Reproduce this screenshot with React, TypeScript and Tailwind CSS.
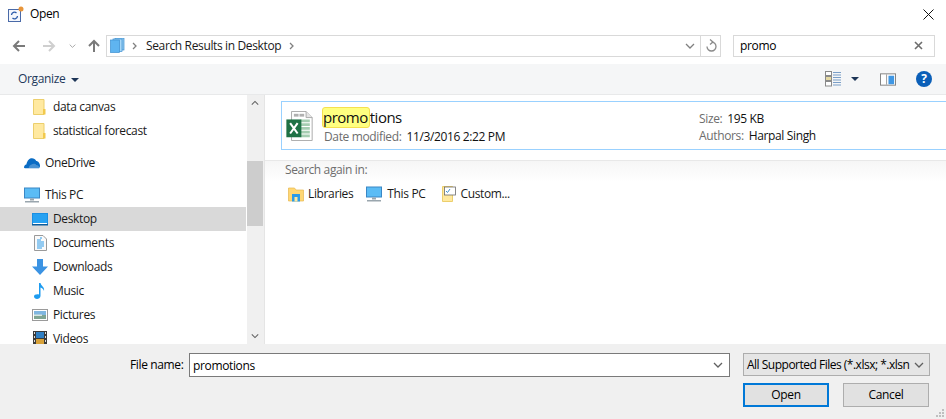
import React from "react";

const Folder = () => (
  <svg width="16" height="16" viewBox="0 0 16 16"><path d="M1.500.5h10.500v15H1.500z" fill="#ffe9a0" stroke="#eccf6c"/><rect x="11" y="10" width="2.500" height="5.500" fill="#f2c94c"/></svg>
);
const Cloud = () => (
  <svg width="17" height="12" viewBox="0 0 17 12"><path d="M0 11c0-2 1-3.500 2.500-3.500C3.500 3 6 1 8.500 1c2 0 3.500 1 4.500 3C15 4 17 6.500 17 9c0 1.500-.5 2-1 2.500H1z" fill="#0a6cc4"/><path d="M5 11.500c0-2 1.500-3.500 3-4 1.500-1 4-1 5 .5 2 0 3.500 1.500 3.500 3.500z" fill="#fff" opacity="0.25"/></svg>
);
const Monitor = ({ w = 16 }: { w?: number }) => (
  <svg width={w} height={w} viewBox="0 0 16 16"><rect x="0.500" y="1" width="15" height="10" fill="#5bbcf5" stroke="#3a87c5"/><rect x="6" y="11.500" width="4" height="2" fill="#9aa6ae"/><rect x="1" y="14" width="14" height="1.500" fill="#9aa6ae"/></svg>
);
const DesktopIcon = () => (
  <svg width="16" height="14" viewBox="0 0 16 14"><rect width="16" height="12" y="1" fill="#1a8fe3"/><rect x="1" y="2" width="14" height="9" fill="#27a2f2"/><rect x="1" y="11" width="14" height="1" fill="#fff"/><rect y="12" width="16" height="1.500" fill="#0a5d9e"/></svg>
);
const Docs = () => (
  <svg width="13" height="16" viewBox="0 0 13 16"><path d="M.5.5h8.500l3.500 3.500v11.500H.5z" fill="#fafafa" stroke="#9a9a9a"/><path d="M3 5h4M6 3h2M3 7h7M3 9h7M3 11h7M3 13h5" stroke="#2c9be8" strokeWidth="1"/></svg>
);
const Down = () => (
  <svg width="16" height="16" viewBox="0 0 16 16"><path d="M5 0h6v7.500h5L8 16 0 7.500h5z" fill="#3b93e3"/></svg>
);
const Music = () => (
  <svg width="12" height="16" viewBox="0 0 12 16"><path d="M5 0h1.500c.5 3 4.500 4 3.500 8-.5-2-2-3-3.500-3.500V13c0 2-2 3-3.500 3S0 15 0 13.500 2 11 5 11.500z" fill="#1e9cf0"/></svg>
);
const Pics = () => (
  <svg width="16" height="12" viewBox="0 0 16 12"><rect x=".5" y=".5" width="15" height="11" fill="#fff" stroke="#9a9a9a"/><rect x="2" y="2" width="12" height="4" fill="#7fb6e0"/><rect x="2" y="6" width="12" height="4" fill="#7fa593"/><rect x="2" y="5.500" width="8" height="1.500" fill="#d8e6e0"/></svg>
);
const Film = () => (
  <svg width="14" height="16" viewBox="0 0 14 16"><rect width="14" height="16" fill="#3a3a3a"/><rect x="3" y="1" width="8" height="6" fill="#2f7fc4"/><rect x="3" y="8" width="8" height="6" fill="#d8a23a"/><path d="M1 1h1v2H1zM1 5h1v2H1zM1 9h1v2H1zM1 13h1v2H1zM12 1h1v2h-1zM12 5h1v2h-1zM12 9h1v2h-1zM12 13h1v2h-1z" fill="#ddd"/></svg>
);
const Excel = () => (
  <svg width="27" height="30" viewBox="0 0 28 32">
    <path d="M5.500.5H21l6.500 6.500v24.500H5.500z" fill="#fff" stroke="#a8a8a8"/>
    <path d="M21 .5V7h6.500" fill="#e4e4e4" stroke="#a8a8a8"/>
    <rect x="8" y="3" width="5" height="3" fill="#b0b0b0"/><rect x="14" y="3" width="5" height="3" fill="#b0b0b0"/>
    <path d="M15 9h10v3H15zM15 13h10v3H15zM15 17h10v3H15zM15 21h10v3H15zM15 25h10v3H15z" fill="#a5cdb1"/>
    <rect x="0" y="9" width="16" height="19" fill="#1e7145"/>
    <path d="M4 13l8 11M12 13L4 24" stroke="#fff" strokeWidth="2.200"/>
  </svg>
);
const Caret = ({ c = "#1d3557" }: { c?: string }) => (
  <svg width="8" height="4" viewBox="0 0 8 4"><path d="M0 0h8L4 4z" fill={c}/></svg>
);
const Chev = ({ c = "#707070", w = 10 }: { c?: string; w?: number }) => (
  <svg width={w} height="6" viewBox="0 0 10 6"><path d="M1 1l4 4 4-4" fill="none" stroke={c} strokeWidth="1.300"/></svg>
);
const Sep = () => (
  <svg width="5" height="8" viewBox="0 0 5 8"><path d="M1 1l3 3-3 3" fill="none" stroke="#808080" strokeWidth="1.300"/></svg>
);
const Arrow = ({ dir, c }: { dir: "l" | "r" | "u"; c: string }) => {
  const rot = dir === "l" ? 0 : dir === "r" ? 180 : 90;
  return (
    <svg width="14" height="14" viewBox="0 0 14 14" style={{ transform: `rotate(${rot}deg)` }}>
      <path d="M13 7H2M7 2L2 7l5 5" fill="none" stroke={c} strokeWidth="2"/>
    </svg>
  );
};

const Row = ({ icon, label, indent, active }: { icon: React.ReactNode; label: string; indent: boolean; active?: boolean }) => (
  <div className={`flex items-center h-6 ${indent ? "pl-[32px]" : "pl-[24px]"} ${active ? "bg-[#d9d9d9]" : ""}`}>
    <div className="w-4 h-4 flex items-center justify-center shrink-0">{icon}</div>
    <span className="ml-[5px] whitespace-nowrap">{label}</span>
  </div>
);

export default function App() {
  return (
    <div className="w-[946px] h-[419px] bg-white overflow-hidden flex flex-col text-[12px] tracking-[-0.36px] text-[#1a1a1a] relative" style={{ fontFamily: '"Open Sans", "Noto Sans", sans-serif' }}>
      {/* title bar */}
      <div className="h-[28px] flex items-center pl-[8px] pr-[12px] shrink-0">
        <svg width="16" height="16" viewBox="0 0 16 16" className="-mt-[1px]">
          <rect x=".5" y="3.500" width="12" height="12" fill="#f4f7fc" stroke="#4a6aa8"/>
          <path d="M3.500 9a3 3 0 0 1 5-2M9.500 10a3 3 0 0 1-5 2" fill="none" stroke="#2a5aa8" strokeWidth="1.300"/>
          <circle cx="13" cy="3" r="2.500" fill="#e8953a"/>
        </svg>
        <span className="ml-[6px] flex-1 text-[12px] text-black">Open</span>
        <svg width="11" height="11" viewBox="0 0 11 11"><path d="M.5.5l10 10M10.500.5l-10 10" stroke="#111" strokeWidth="1"/></svg>
      </div>
      {/* nav bar */}
      <div className="h-[36px] flex items-center shrink-0 pb-[1px] pr-[12px]">
        <div className="w-[106px] flex items-center shrink-0">
          <div className="ml-[12px]"><Arrow dir="l" c="#7a7a7a" /></div>
          <div className="ml-[16px]"><Arrow dir="r" c="#cfcfcf" /></div>
          <div className="ml-[13px]"><Chev c="#a0a0a0" w={7} /></div>
          <div className="ml-[11px]"><Arrow dir="u" c="#7a7a7a" /></div>
        </div>
        <div className="w-[615px] h-[22px] border border-[#d9d9d9] flex items-center shrink-0">
          <svg width="15" height="15" viewBox="0 0 15 15" className="ml-[3px]">
            <rect x="5" y="0" width="9" height="12" fill="#8fc8ef" stroke="#3d8fd0" strokeWidth=".7"/>
            <rect x="3" y="1" width="9" height="12.500" fill="#a8d8f7" stroke="#3d8fd0" strokeWidth=".7"/>
            <rect x=".5" y="2" width="9" height="12.500" fill="#5fb4f0" stroke="#3d8fd0" strokeWidth=".7"/>
          </svg>
          <div className="ml-[7px]"><Sep /></div>
          <span className="ml-[9px] text-[#1a1a1a]">Search Results in Desktop</span>
          <div className="ml-[8px]"><Sep /></div>
          <div className="ml-auto flex items-center h-full">
            <Chev c="#808080" />
            <div className="ml-[5px] w-[20px] h-full border-l border-[#d9d9d9] flex items-center justify-center">
              <svg width="12" height="13" viewBox="0 0 12 13"><path d="M6.500 3a4.500 4.500 0 1 1-4.500 4.500M5 .5L8 3 5 5.500" fill="none" stroke="#8a8a8a" strokeWidth="1.300"/></svg>
            </div>
          </div>
        </div>
        <div className="ml-[12px] w-[202px] h-[22px] border border-[#d9d9d9] flex items-center pl-[6px] pr-[11px] shrink-0">
          <span className="flex-1 text-black">promo</span>
          <svg width="9" height="9" viewBox="0 0 9 9"><path d="M1 1l7 7M8 1L1 8" stroke="#6d6d6d" strokeWidth="1.600"/></svg>
        </div>
      </div>
      {/* toolbar */}
      <div className="h-[31px] bg-[#f5f6f7] border-b border-[#e8e9ea] flex items-center pl-[18px] pr-[14px] shrink-0">
        <span className="text-[#1e395b]">Organize</span>
        <div className="ml-[6px] mt-[1px]"><Caret /></div>
        <div className="ml-auto flex items-center">
          <svg width="16" height="16" viewBox="0 0 16 16">
            <rect x=".5" y=".5" width="6" height="4" fill="#fff" stroke="#8a8a8a"/>
            <rect x=".5" y="5.500" width="6" height="4" fill="#e5d9a3" stroke="#8a8a8a"/>
            <rect x=".5" y="10.500" width="6" height="4.500" fill="#fff" stroke="#8a8a8a"/>
            <path d="M8 1.500h8M8 4h8M8 6.500h8M8 9h8M8 11.500h8M8 14h8" stroke="#7a9fc8" strokeWidth="1"/>
          </svg>
          <div className="ml-[10px]"><Caret /></div>
          <svg width="16" height="13" viewBox="0 0 17 13" className="ml-[21px]">
            <rect x=".5" y=".5" width="16" height="12" fill="#fff" stroke="#7f7f7f"/>
            <rect x="9" y="2.500" width="6" height="9" fill="#3f97e4"/>
            <rect x="6.500" y="1" width="1" height="11" fill="#9a9a9a"/>
          </svg>
          <svg width="16" height="16" viewBox="0 0 16 16" className="ml-[20px]">
            <circle cx="8" cy="8" r="8" fill="#0b5fb8"/>
          </svg>
          <span className="absolute right-[14px] w-4 text-center text-[12px] font-bold text-white leading-none">?</span>
        </div>
      </div>
      {/* main */}
      <div className="flex-1 flex min-h-0">
        <div className="w-[247px] shrink-0 overflow-hidden pr-[1px]">
          <Row indent icon={<Folder />} label="data canvas" />
          <Row indent icon={<Folder />} label="statistical forecast" />
          <div className="mt-[8px]"><Row indent={false} icon={<Cloud />} label="OneDrive" /></div>
          <div className="mt-[8px]"><Row indent={false} icon={<Monitor />} label="This PC" /></div>
          <Row indent active icon={<DesktopIcon />} label="Desktop" />
          <Row indent icon={<Docs />} label="Documents" />
          <Row indent icon={<Down />} label="Downloads" />
          <Row indent icon={<Music />} label="Music" />
          <Row indent icon={<Pics />} label="Pictures" />
          <Row indent icon={<Film />} label="Videos" />
        </div>
        {/* scrollbar */}
        <div className="w-[16px] shrink-0 bg-[#f0f0f0] flex flex-col items-center">
          <div className="h-[17px] flex items-center justify-center rotate-180"><Chev c="#606060" w={8} /></div>
          <div className="h-[49px]" />
          <div className="h-[65px] w-full bg-[#cdcdcd]" />
          <div className="flex-1" />
          <div className="h-[17px] flex items-center justify-center"><Chev c="#606060" w={8} /></div>
        </div>
        <div className="w-[2px] shrink-0 bg-[#f0f0f0] border-r border-[#e5e5e5]" />
        {/* results */}
        <div className="flex-1 min-w-0 pl-[16px] pt-[6px] overflow-hidden">
          <div className="w-[700px] h-[49px] border border-[#99d1ff] flex items-center pl-[4px]">
            <Excel />
            <div className="ml-[10px] w-[376px] shrink-0">
              <div className="text-[15px] leading-[21px] text-[#111] flex tracking-[-0.5px]">
                <span className="bg-[#ffff80] border border-[#f5e050] rounded-[3px] -ml-[1px] leading-[19px] pr-[1px]">promo</span>
                <span>tions</span>
              </div>
              <div className="mt-[1px] ml-[1px] leading-[16px]">
                <span className="text-[#6d6d6d]">Date modified:</span>
                <span className="ml-[5px] text-[#111]">11/3/2016 2:22 PM</span>
              </div>
            </div>
            <div className="leading-[17px] mt-[2px]">
              <div><span className="text-[#6d6d6d]">Size:</span><span className="ml-[5px] text-[#111]">195 KB</span></div>
              <div><span className="text-[#6d6d6d]">Authors:</span><span className="ml-[5px] text-[#111]">Harpal Singh</span></div>
            </div>
          </div>
          <div className="-ml-[16px] mt-[10px] border-t border-[#e8e8e8] h-[22px] bg-gradient-to-b from-[#f6f6f6] to-white pl-[20px] pt-[1px] text-[#6d6d6d] leading-[16px]">
            Search again in:
          </div>
          <div className="flex items-center h-[24px] pl-[7px] text-[#1a1a1a]">
            <svg width="16" height="16" viewBox="0 0 16 16"><path d="M.5 2h6l1.500 2h7.500v11H.5z" fill="#ffd774" stroke="#e6b84f" strokeWidth=".7"/><rect x="4" y="8" width="8" height="7.500" fill="#2a9bea"/><rect x="6.500" y="11" width="3" height="4.500" fill="#ffe9a0"/></svg>
            <span className="ml-[4px]">Libraries</span>
            <div className="ml-[13px]"><Monitor /></div>
            <span className="ml-[5px]">This PC</span>
            <svg width="16" height="16" viewBox="0 0 16 16" className="ml-[16px]"><path d="M1.500.5h10v15h-10z" fill="#ffe9a0" stroke="#eccf6c"/><rect x="3.500" y="1" width="11" height="8" fill="#fff" stroke="#6a6a6a" strokeWidth=".8"/><path d="M5 5l1.500 1.500L9 3" stroke="#3d8fd0" fill="none"/></svg>
            <span className="ml-[3px]">Custom...</span>
          </div>
        </div>
      </div>
      {/* bottom */}
      <div className="h-[75px] bg-[#f0f0f0] shrink-0 relative pt-[9px]">
        <div className="flex items-start h-[24px]">
          <span className="ml-[130px] w-[59px] leading-[24px] text-black">File name:</span>
          <div className="w-[541px] h-[24px] bg-white border border-[#7a7a7a] flex items-center pl-[3px] pr-[6px]">
            <span className="flex-1 text-black pt-[1px]">promotions</span>
            <Chev c="#606060" />
          </div>
          <div className="ml-[13px] w-[187px] h-[23px] bg-[#e5e5e5] border border-[#adadad] flex items-center pl-[3px] pr-[5px]">
            <span className="flex-1 whitespace-nowrap min-w-0 text-black tracking-[-0.5px]">All Supported Files (*.xlsx; *.xlsn</span>
            <div className="ml-[5px] shrink-0"><Chev c="#606060" /></div>
          </div>
        </div>
        <div className="flex mt-[6px] ml-[743px] gap-[14px]">
          <button className="w-[86px] h-[24px] bg-[#e1e1e1] border-2 border-[#0078d7] text-black">Open</button>
          <button className="w-[86px] h-[24px] bg-[#e1e1e1] border border-[#adadad] text-black">Cancel</button>
        </div>
        <svg width="10" height="10" viewBox="0 0 10 10" className="absolute right-[1px] bottom-[1px]">
          <path d="M7 1h2v2H7zM4 4h2v2H4zM7 4h2v2H7zM1 7h2v2H1zM4 7h2v2H4zM7 7h2v2H7z" fill="#bfbfbf"/>
        </svg>
      </div>
    </div>
  );
}
